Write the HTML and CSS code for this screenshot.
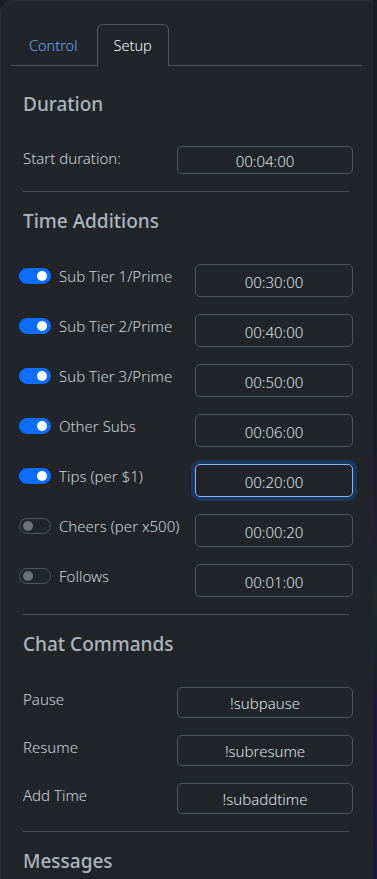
FILE: index.html
```html
<!DOCTYPE html>
<html>
<head>
<meta charset="utf-8">
<link rel="stylesheet" href="styles.css">
</head>
<body>
<div class="page">
  <div class="panel">
    <ul class="tabs">
      <li class="tab">Control</li>
      <li class="tab active">Setup</li>
    </ul>
    <div class="content">
      <h2 class="heading first">Duration</h2>
      <div class="row row-plain">
        <span class="label">Start duration:</span>
        <div class="input wide">00:04:00</div>
      </div>
      <hr class="divider">
      <h2 class="heading">Time Additions</h2>
      <div class="rows">
        <div class="row row-switch">
          <span class="switch on"></span>
          <span class="label">Sub Tier 1/Prime</span>
          <div class="input narrow">00:30:00</div>
        </div>
        <div class="row row-switch">
          <span class="switch on"></span>
          <span class="label">Sub Tier 2/Prime</span>
          <div class="input narrow">00:40:00</div>
        </div>
        <div class="row row-switch">
          <span class="switch on"></span>
          <span class="label">Sub Tier 3/Prime</span>
          <div class="input narrow">00:50:00</div>
        </div>
        <div class="row row-switch">
          <span class="switch on"></span>
          <span class="label">Other Subs</span>
          <div class="input narrow">00:06:00</div>
        </div>
        <div class="row row-switch">
          <span class="switch on"></span>
          <span class="label">Tips (per $1)</span>
          <div class="input narrow focus">00:20:00</div>
        </div>
        <div class="row row-switch">
          <span class="switch"></span>
          <span class="label">Cheers (per x500)</span>
          <div class="input narrow">00:00:20</div>
        </div>
        <div class="row row-switch">
          <span class="switch"></span>
          <span class="label">Follows</span>
          <div class="input narrow">00:01:00</div>
        </div>
      </div>
      <hr class="divider">
      <h2 class="heading">Chat Commands</h2>
      <div class="rows cmd">
        <div class="row row-plain">
          <span class="label">Pause</span>
          <div class="input wide tall">!subpause</div>
        </div>
        <div class="row row-plain">
          <span class="label">Resume</span>
          <div class="input wide tall">!subresume</div>
        </div>
        <div class="row row-plain">
          <span class="label">Add Time</span>
          <div class="input wide tall">!subaddtime</div>
        </div>
      </div>
      <hr class="divider">
      <h2 class="heading">Messages</h2>
    </div>
  </div>
  <div class="edge"></div>
</div>
</body>
</html>
```

FILE: styles.css
```css
* { box-sizing: border-box; }
html, body { margin: 0; padding: 0; }
body {
  background: #1b1e22;
  font-family: "Noto Sans", "Open Sans", sans-serif;
  font-weight: 300;
  color: #ced4da;
  width: 377px;
  height: 879px;
  overflow: hidden;
}
.page {
  display: flex;
  height: 879px;
}
.panel {
  width: 373px;
  height: 879px;
  background: #212529;
  border-top-left-radius: 13px;
  border-top: 1px solid #2a2e33;
  border-left: 1px solid #2a2e33;
  overflow: hidden;
}
.edge {
  width: 4px;
  background: linear-gradient(180deg, #1a1d21 0%, #1a1d21 45%, #261c3a 60%, #1d2a26 68%, #21193a 80%, #1f1840 100%);
}
.tabs {
  list-style: none;
  margin: 23px 11px 0 10px;
  padding: 0;
  display: flex;
  border-bottom: 1px solid #50565c;
  height: 42px;
}
.tab {
  height: 41px;
  padding: 0 18px 0 17px;
  display: flex;
  align-items: center;
  font-size: 14.5px;
  color: #6ea8fe;
  border: 1px solid transparent;
  border-bottom: none;
  border-top-left-radius: 6px;
  border-top-right-radius: 6px;
}
.tab.active {
  color: #f8f9fa;
  border-color: #50565c;
  background: #212529;
  height: 42px;
  margin-bottom: -1px;
  padding: 0 16px 1px 16px;
}
.content {
  padding: 0 20px 0 22px;
}
.heading {
  margin: 17px 0 0 0;
  font-size: 19px;
  line-height: 24px;
  font-weight: 500;
  color: #adb5bd;
}
.heading.first { margin-top: 26px; }
.row {
  display: flex;
  align-items: flex-start;
}
.row-plain {
  justify-content: space-between;
  margin-top: 30px;
}
.label {
  font-size: 15px;
  line-height: 20px;
  padding-top: 2px;
  color: #ced4da;
}
.input {
  border: 1px solid #4e555b;
  border-radius: 5px;
  height: 28px;
  display: flex;
  align-items: center;
  justify-content: center;
  font-size: 15px;
  color: #dee2e6;
  padding-top: 1px;
}
.input.wide { width: 176px; }
.input.tall { height: 31px; }
.input.narrow {
  width: 158px;
  height: 33px;
  margin-left: auto;
  padding-top: 3px;
}
.input.focus {
  border-color: #86b7fe;
  box-shadow: 0 0 0 4px rgba(13, 110, 253, 0.25);
}
.divider {
  border: none;
  border-top: 1px solid #4a5056;
  margin: 17px 4px 0 0;
}
.rows {
  display: flex;
  flex-direction: column;
  gap: 17px;
  margin-top: 31px;
}
.rows.cmd { margin-top: 31px; gap: 17px; }
.rows.cmd .row-plain { margin-top: 0; }
.switch {
  width: 32px;
  height: 16px;
  border-radius: 8px;
  margin: 4px 8px 0 -4px;
  border: 1px solid #4e555b;
  position: relative;
  flex: none;
}
.switch::after {
  content: "";
  position: absolute;
  top: 2px;
  left: 3px;
  width: 10px;
  height: 10px;
  border-radius: 50%;
  background: #6c7176;
}
.switch.on {
  background: #0d6efd;
  border-color: #0d6efd;
}
.switch.on::after {
  left: auto;
  right: 3px;
  background: #ffffff;
}
```
